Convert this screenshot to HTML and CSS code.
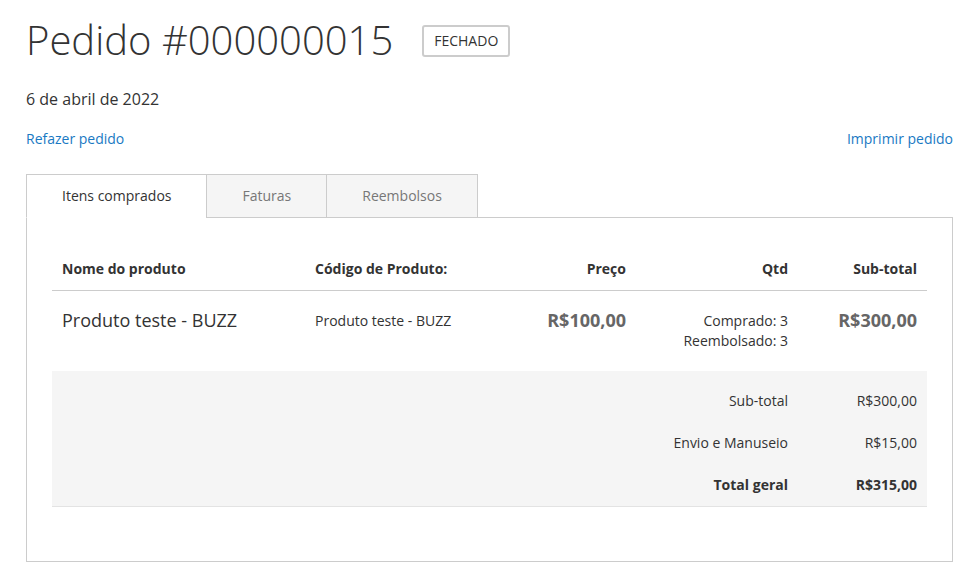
FILE: index.html
```html
<!DOCTYPE html>
<html lang="pt-BR">
<head>
<meta charset="utf-8">
<title>Pedido #000000015</title>
<link rel="stylesheet" href="styles.css">
</head>
<body>
<main class="page">
  <div class="title-row">
    <h1 class="page-title">Pedido #000000015</h1>
    <span class="order-status">Fechado</span>
  </div>
  <div class="order-date">6 de abril de 2022</div>
  <div class="actions">
    <a class="action" href="#">Refazer pedido</a>
    <a class="action" href="#">Imprimir pedido</a>
  </div>
  <ul class="tabs">
    <li class="tab active">Itens comprados</li>
    <li class="tab">Faturas</li>
    <li class="tab">Reembolsos</li>
  </ul>
  <section class="tab-content">
    <table class="items">
      <colgroup>
        <col class="c-name"><col class="c-sku"><col class="c-price"><col class="c-qty"><col class="c-sub">
      </colgroup>
      <thead>
        <tr>
          <th class="left">Nome do produto</th>
          <th class="left">Código de Produto:</th>
          <th class="right">Preço</th>
          <th class="right">Qtd</th>
          <th class="right">Sub-total</th>
        </tr>
      </thead>
      <tbody>
        <tr>
          <td class="name">Produto teste - BUZZ</td>
          <td class="sku">Produto teste - BUZZ</td>
          <td class="right price">R$100,00</td>
          <td class="right qty">
            <div>Comprado: 3</div>
            <div>Reembolsado: 3</div>
          </td>
          <td class="right price">R$300,00</td>
        </tr>
      </tbody>
      <tfoot>
        <tr class="first">
          <th colspan="4" class="right">Sub-total</th>
          <td class="right">R$300,00</td>
        </tr>
        <tr>
          <th colspan="4" class="right">Envio e Manuseio</th>
          <td class="right">R$15,00</td>
        </tr>
        <tr class="grand">
          <th colspan="4" class="right"><strong>Total geral</strong></th>
          <td class="right"><strong>R$315,00</strong></td>
        </tr>
      </tfoot>
    </table>
  </section>
</main>
</body>
</html>
```

FILE: styles.css
```css
* { box-sizing: border-box; }
html, body { margin: 0; padding: 0; background: #fff; }
body {
  font-family: "Open Sans", "Noto Sans", sans-serif;
  font-size: 14px;
  line-height: 20px;
  color: #333;
}
.page {
  padding: 18px 15px 0 26px;
}
.title-row {
  display: flex;
  align-items: flex-start;
}
.page-title {
  margin: 0;
  font-size: 40px;
  font-weight: 300;
  line-height: 44px;
  color: #333;
}
.order-status {
  margin: 7px 0 0 29px;
  padding: 2px 10px;
  border: 2px solid #ccc;
  border-radius: 3px;
  text-transform: uppercase;
  font-size: 14px;
  line-height: 24px;
  color: #333;
}
.order-date {
  margin-top: 26px;
  font-size: 16px;
  line-height: 22px;
}
.actions {
  margin-top: 19px;
  display: flex;
  justify-content: space-between;
}
.action {
  color: #1979c3;
  text-decoration: none;
}
.tabs {
  list-style: none;
  margin: 25px 0 -1px 0;
  padding: 0;
  display: flex;
  position: relative;
  z-index: 1;
}
.tab {
  padding: 0 35px;
  line-height: 42px;
  border: 1px solid #ccc;
  background: #f5f5f5;
  color: #777;
  margin-right: -1px;
}
.tab.active {
  background: #fff;
  color: #333;
  border-bottom-color: #fff;
}
.tab-content {
  border: 1px solid #ccc;
  padding: 30px 25px 54px 25px;
}
.items {
  width: 100%;
  border-collapse: collapse;
  table-layout: fixed;
}
.c-name { width: 253px; }
.c-sku { width: 210px; }
.c-price { width: 121px; }
.c-qty { width: 162px; }
.c-sub { width: 129px; }
.left { text-align: left; }
.right { text-align: right; }
.items thead th {
  padding: 11px 10px;
  font-weight: 700;
  border-bottom: 1px solid #ccc;
}
.items tbody td {
  padding: 20px 10px;
  vertical-align: top;
}
.items td.name {
  font-size: 18px;
  line-height: 18px;
}
.items td.price {
  font-size: 18px;
  line-height: 18px;
  font-weight: 700;
  color: #666;
}
.items tfoot {
  background: #f5f5f5;
}
.items tfoot th,
.items tfoot td {
  padding: 11px 10px;
  font-weight: 400;
}
.items tfoot tr.first th,
.items tfoot tr.first td {
  padding-top: 20px;
}
.items tfoot tr.grand th,
.items tfoot tr.grand td {
  border-bottom: 1px solid #e3e3e3;
}
.items tfoot strong { font-weight: 700; }
```
